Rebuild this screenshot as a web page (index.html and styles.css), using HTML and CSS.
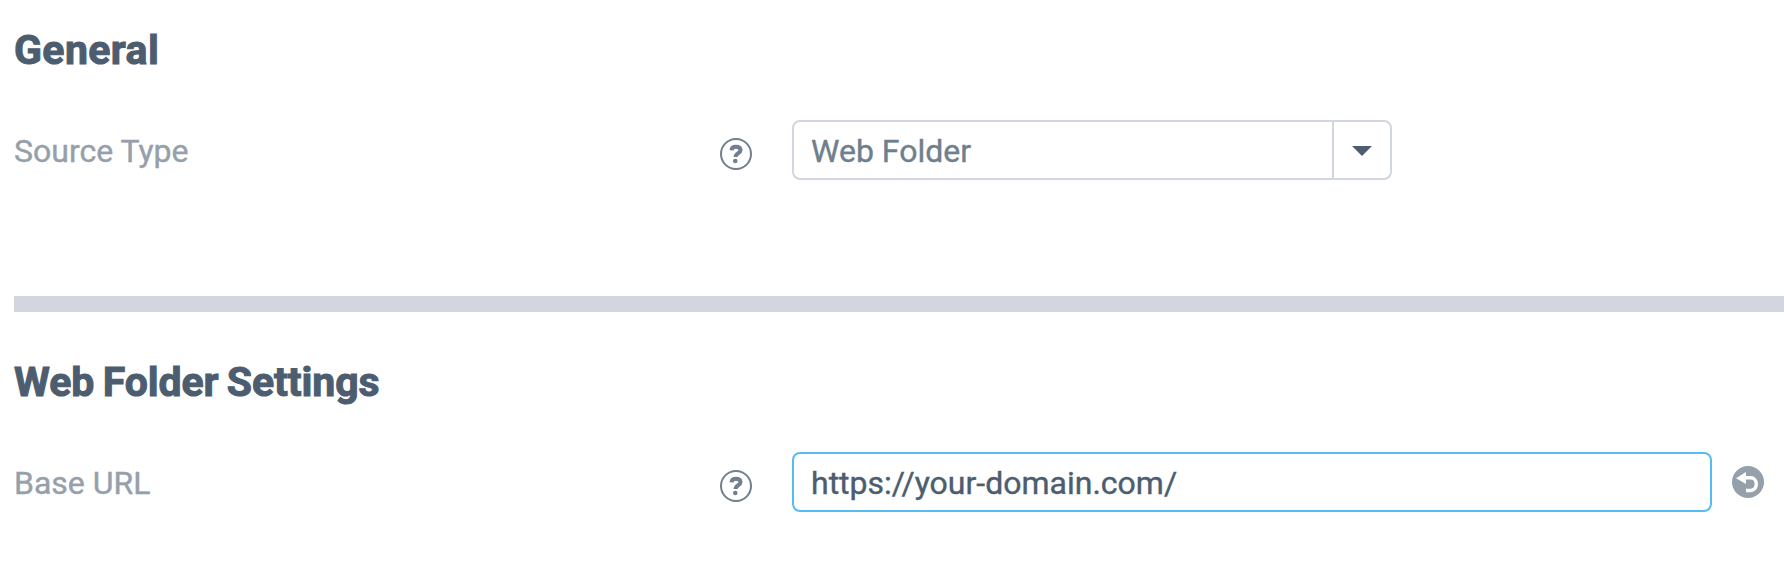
FILE: index.html
```html
<!DOCTYPE html>
<html lang="en">
<head>
<meta charset="utf-8">
<title>Source settings</title>
<link rel="stylesheet" href="styles.css">
</head>
<body>
<section class="section section-general">
  <h2 class="title title-general">General</h2>
  <div class="row">
    <span class="label">Source Type</span>
    <svg class="help" viewBox="0 0 32 32"><circle cx="16" cy="16" r="15"/><path d="M11.5 12.3C11.7 9.9 13.4 8.7 16 8.7C18.8 8.7 20.5 10 20.5 12.2C20.5 15.1 15.6 15.3 15.6 19"/><circle class="dot" cx="15.3" cy="23" r="2.3"/></svg>
    <div class="select">
      <span class="value value-type">Web Folder</span>
      <span class="toggle"><svg class="caret" viewBox="0 0 20 10"><path d="M0 0H20L10 10Z"/></svg></span>
    </div>
  </div>
</section>
<hr class="divider">
<section class="section">
  <h2 class="title title-folder">Web Folder Settings</h2>
  <div class="row">
    <span class="label">Base URL</span>
    <svg class="help" viewBox="0 0 32 32"><circle cx="16" cy="16" r="15"/><path d="M11.5 12.3C11.7 9.9 13.4 8.7 16 8.7C18.8 8.7 20.5 10 20.5 12.2C20.5 15.1 15.6 15.3 15.6 19"/><circle class="dot" cx="15.3" cy="23" r="2.3"/></svg>
    <div class="input"><span class="value value-url">https://your-domain.com/</span></div>
    <svg class="reset" viewBox="0 0 32 32"><circle cx="16" cy="16" r="16"/><path class="head" d="M4 12.2L14 6V18Z"/><path class="tail" d="M13 11.8H18.5C22 11.8 24.3 14.5 24.3 18C24.3 21.7 22 24.4 18.5 24.4H14"/></svg>
  </div>
</section>
</body>
</html>
```
FILE: styles.css
```css
* { box-sizing: border-box; }
body {
  margin: 0;
  padding-left: 14px;
  background: #fff;
  font-family: Roboto, "Liberation Sans", sans-serif;
  font-size: 32px;
  line-height: 40px;
}
.section { padding-top: 46px; }
.section-general { height: 296px; padding-top: 26px; }
.title {
  margin: 0 0 46px;
  height: 48px;
  font-size: 41px;
  line-height: 48px;
  font-weight: 700;
  color: #4c5d70;
  -webkit-text-stroke: 1px #4c5d70;
  white-space: nowrap;
}
.title-general { letter-spacing: 0.4px; }
.title-folder { letter-spacing: -0.1px; word-spacing: -1.6px; }
.row { display: flex; align-items: center; height: 60px; }
.label { width: 706px; padding-top: 1px; color: #95a0ab; }
.label, .value { -webkit-text-stroke: 0.4px currentColor; }
.value { padding-top: 1px; }
.help {
  width: 32px;
  height: 32px;
  margin: 8px 40px 0 0;
  fill: none;
  stroke: #717f8e;
  stroke-width: 2;
}
.help path { stroke-width: 4; }
.help .dot { fill: #717f8e; stroke: none; }
.select, .input {
  display: flex;
  align-items: center;
  height: 60px;
  padding-left: 17px;
  border: 2px solid #d1d6df;
  border-radius: 8px;
}
.select { width: 600px; color: #6f7f8d; }
.input { width: 920px; border-color: #57bbf6; color: #4c5d70; }
.toggle {
  display: flex;
  align-items: center;
  justify-content: center;
  width: 58px;
  height: 56px;
  margin-left: auto;
  padding-top: 2px;
  border-left: 2px solid #d1d6df;
}
.caret { width: 20px; height: 10px; fill: #4c5d70; }
.divider { height: 16px; margin: 0; border: 0; background: #d1d6df; }
.reset { width: 32px; height: 32px; margin-left: 20px; fill: #95a0ab; }
.reset .head { fill: #fff; }
.reset .tail { fill: none; stroke: #fff; stroke-width: 3.5; }
```
